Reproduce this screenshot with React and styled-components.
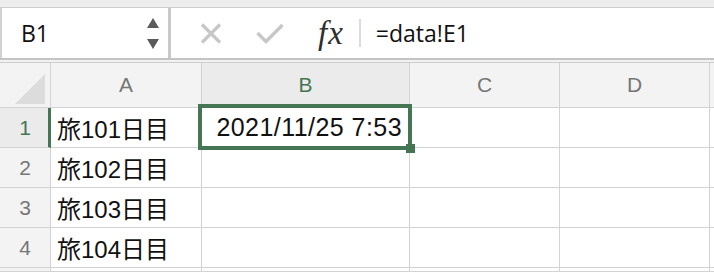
import { Fragment } from "react";
import styled, { createGlobalStyle } from "styled-components";

const GlobalStyle = createGlobalStyle`
  html, body {
    margin: 0;
    padding: 0;
    background: #ffffff;
    overflow: hidden;
  }
`;

const GREEN = "#457653";
const GRID = "#d3d3d3";

const Window = styled.div`
  width: 714px;
  height: 272px;
  display: flex;
  flex-direction: column;
  background: #ffffff;
  font-family: "Liberation Sans", "Noto Sans CJK JP", sans-serif;
  overflow: hidden;
`;

const TopStrip = styled.div`
  height: 7px;
  background: #ededed;
  border-bottom: 1px solid #cdcdcd;
`;

const FormulaBar = styled.div`
  height: 50px;
  display: flex;
  border-bottom: 2px solid #c4c4c4;
`;

const NameBox = styled.div`
  width: 171px;
  box-sizing: border-box;
  display: flex;
  align-items: center;
  justify-content: space-between;
  border-left: 2px solid #d2d2d2;
  border-right: 3px solid #c9c9c9;
  padding: 0 9px 0 19px;
`;

const NameText = styled.span`
  font-family: "Open Sans", "Noto Sans", sans-serif;
  font-size: 23px;
  color: #111;
`;

const Spinner = styled.div`
  display: flex;
  flex-direction: column;
  gap: 11px;
  align-items: center;
`;

const Arrow = styled.div`
  width: 0;
  height: 0;
  border-left: 6px solid transparent;
  border-right: 6px solid transparent;
  ${({ $down }) =>
    $down
      ? "border-top: 10px solid #5b5b5b;"
      : "border-bottom: 10px solid #5b5b5b;"}
`;

const FormulaArea = styled.div`
  flex: 1;
  display: flex;
  align-items: center;
  padding-left: 29px;
`;

const ToolIcon = styled.div`
  display: flex;
  align-items: center;
  justify-content: center;
  margin-right: ${({ $gap }) => $gap}px;
`;

const Fx = styled.span`
  font-family: "Liberation Serif", "DejaVu Serif", serif;
  font-style: italic;
  font-size: 33px;
  color: #2e2e2e;
  line-height: 1;
  margin-right: 15px;
  letter-spacing: 1px;
`;

const Separator = styled.div`
  width: 2px;
  height: 28px;
  background: #dcdcdc;
  margin-right: 15px;
`;

const FormulaInput = styled.span`
  font-family: "Open Sans", "Noto Sans", sans-serif;
  font-size: 23px;
  color: #111;
`;

const Gap = styled.div`
  height: 2px;
  background: #f2f2f2;
  border-bottom: 1px solid #cdcdcd;
`;

const Sheet = styled.div`
  flex: 1;
  display: grid;
  grid-template-columns: 51px 151px 208px 150px 150px 1fr;
  grid-template-rows: 45px repeat(4, 40px) 1fr;
`;

const Corner = styled.div`
  background: #f3f3f3;
  border-right: 1px solid ${GRID};
  border-bottom: 1px solid ${GRID};
  display: flex;
  align-items: flex-end;
  justify-content: flex-end;
  padding: 0 5px 3px 0;
`;

const ColHeader = styled.div`
  background: ${({ $active }) => ($active ? "#ebebeb" : "#f3f3f3")};
  border-right: 1px solid ${GRID};
  border-bottom: 1px solid ${GRID};
  display: flex;
  align-items: center;
  justify-content: center;
  font-size: 21px;
  color: ${({ $active }) => ($active ? GREEN : "#767676")};
`;

const RowHeader = styled.div`
  background: ${({ $active }) => ($active ? "#ebebeb" : "#f3f3f3")};
  border-right: ${({ $active }) =>
    $active ? `3px solid ${GREEN}` : `1px solid ${GRID}`};
  border-bottom: 1px solid ${GRID};
  display: flex;
  align-items: center;
  justify-content: center;
  padding-left: ${({ $active }) => ($active ? 2 : 0)}px;
  font-size: 21px;
  color: ${({ $active }) => ($active ? GREEN : "#767676")};
`;

const Cell = styled.div`
  position: relative;
  z-index: ${({ $selected }) => ($selected ? 2 : "auto")};
  border-right: 1px solid ${GRID};
  border-bottom: 1px solid ${GRID};
  display: flex;
  align-items: center;
  justify-content: ${({ $right }) => ($right ? "flex-end" : "flex-start")};
  padding: ${({ $right }) => ($right ? "0 7px 0 0" : "0 0 0 6px")};
  font-size: ${({ $right }) => ($right ? 25 : 24)}px;
  letter-spacing: ${({ $right }) => ($right ? 0.45 : 0)}px;
  color: #111;
  white-space: nowrap;
`;

const Selection = styled.div`
  position: absolute;
  left: -4px;
  top: -4px;
  right: -3px;
  bottom: -3px;
  border: 4px solid ${GREEN};
  pointer-events: none;
`;

const FillHandle = styled.div`
  position: absolute;
  right: -7px;
  bottom: -7px;
  width: 9px;
  height: 9px;
  background: ${GREEN};
`;

const columns = ["A", "B", "C", "D"];
const rows = [
  { n: 1, a: "旅101日目", b: "2021/11/25 7:53" },
  { n: 2, a: "旅102日目" },
  { n: 3, a: "旅103日目" },
  { n: 4, a: "旅104日目" },
  { n: 5, a: "" },
];

const App = () => {
  return (
    <Window>
      <GlobalStyle />
      <TopStrip />
      <FormulaBar>
        <NameBox>
          <NameText>B1</NameText>
          <Spinner>
            <Arrow />
            <Arrow $down />
          </Spinner>
        </NameBox>
        <FormulaArea>
          <ToolIcon $gap={34}>
            <svg width="22" height="21" viewBox="0 0 22 21">
              <path
                d="M2 1.5 L20 19.5 M20 1.5 L2 19.5"
                stroke="#c7c7c7"
                strokeWidth="3.2"
                fill="none"
              />
            </svg>
          </ToolIcon>
          <ToolIcon $gap={34}>
            <svg width="28" height="21" viewBox="0 0 28 21">
              <path
                d="M1.5 10 L10 18.5 L26.5 2"
                stroke="#c7c7c7"
                strokeWidth="3.4"
                fill="none"
              />
            </svg>
          </ToolIcon>
          <Fx>fx</Fx>
          <Separator />
          <FormulaInput>=data!E1</FormulaInput>
        </FormulaArea>
      </FormulaBar>
      <Gap />
      <Sheet>
        <Corner>
          <svg width="30" height="30" viewBox="0 0 30 30">
            <polygon points="30,0 30,30 0,30" fill="#dcdcdc" />
          </svg>
        </Corner>
        {columns.map((c) => (
          <ColHeader key={c} $active={c === "B"}>
            {c}
          </ColHeader>
        ))}
        <ColHeader />
        {rows.map((r) => (
          <Fragment key={r.n}>
            <RowHeader $active={r.n === 1}>{r.n < 5 ? r.n : ""}</RowHeader>
            <Cell>{r.a}</Cell>
            <Cell $right $selected={r.n === 1}>
              {r.b}
              {r.n === 1 && (
                <Selection>
                  <FillHandle />
                </Selection>
              )}
            </Cell>
            <Cell />
            <Cell />
            <Cell />
          </Fragment>
        ))}
      </Sheet>
    </Window>
  );
};

export default App;
